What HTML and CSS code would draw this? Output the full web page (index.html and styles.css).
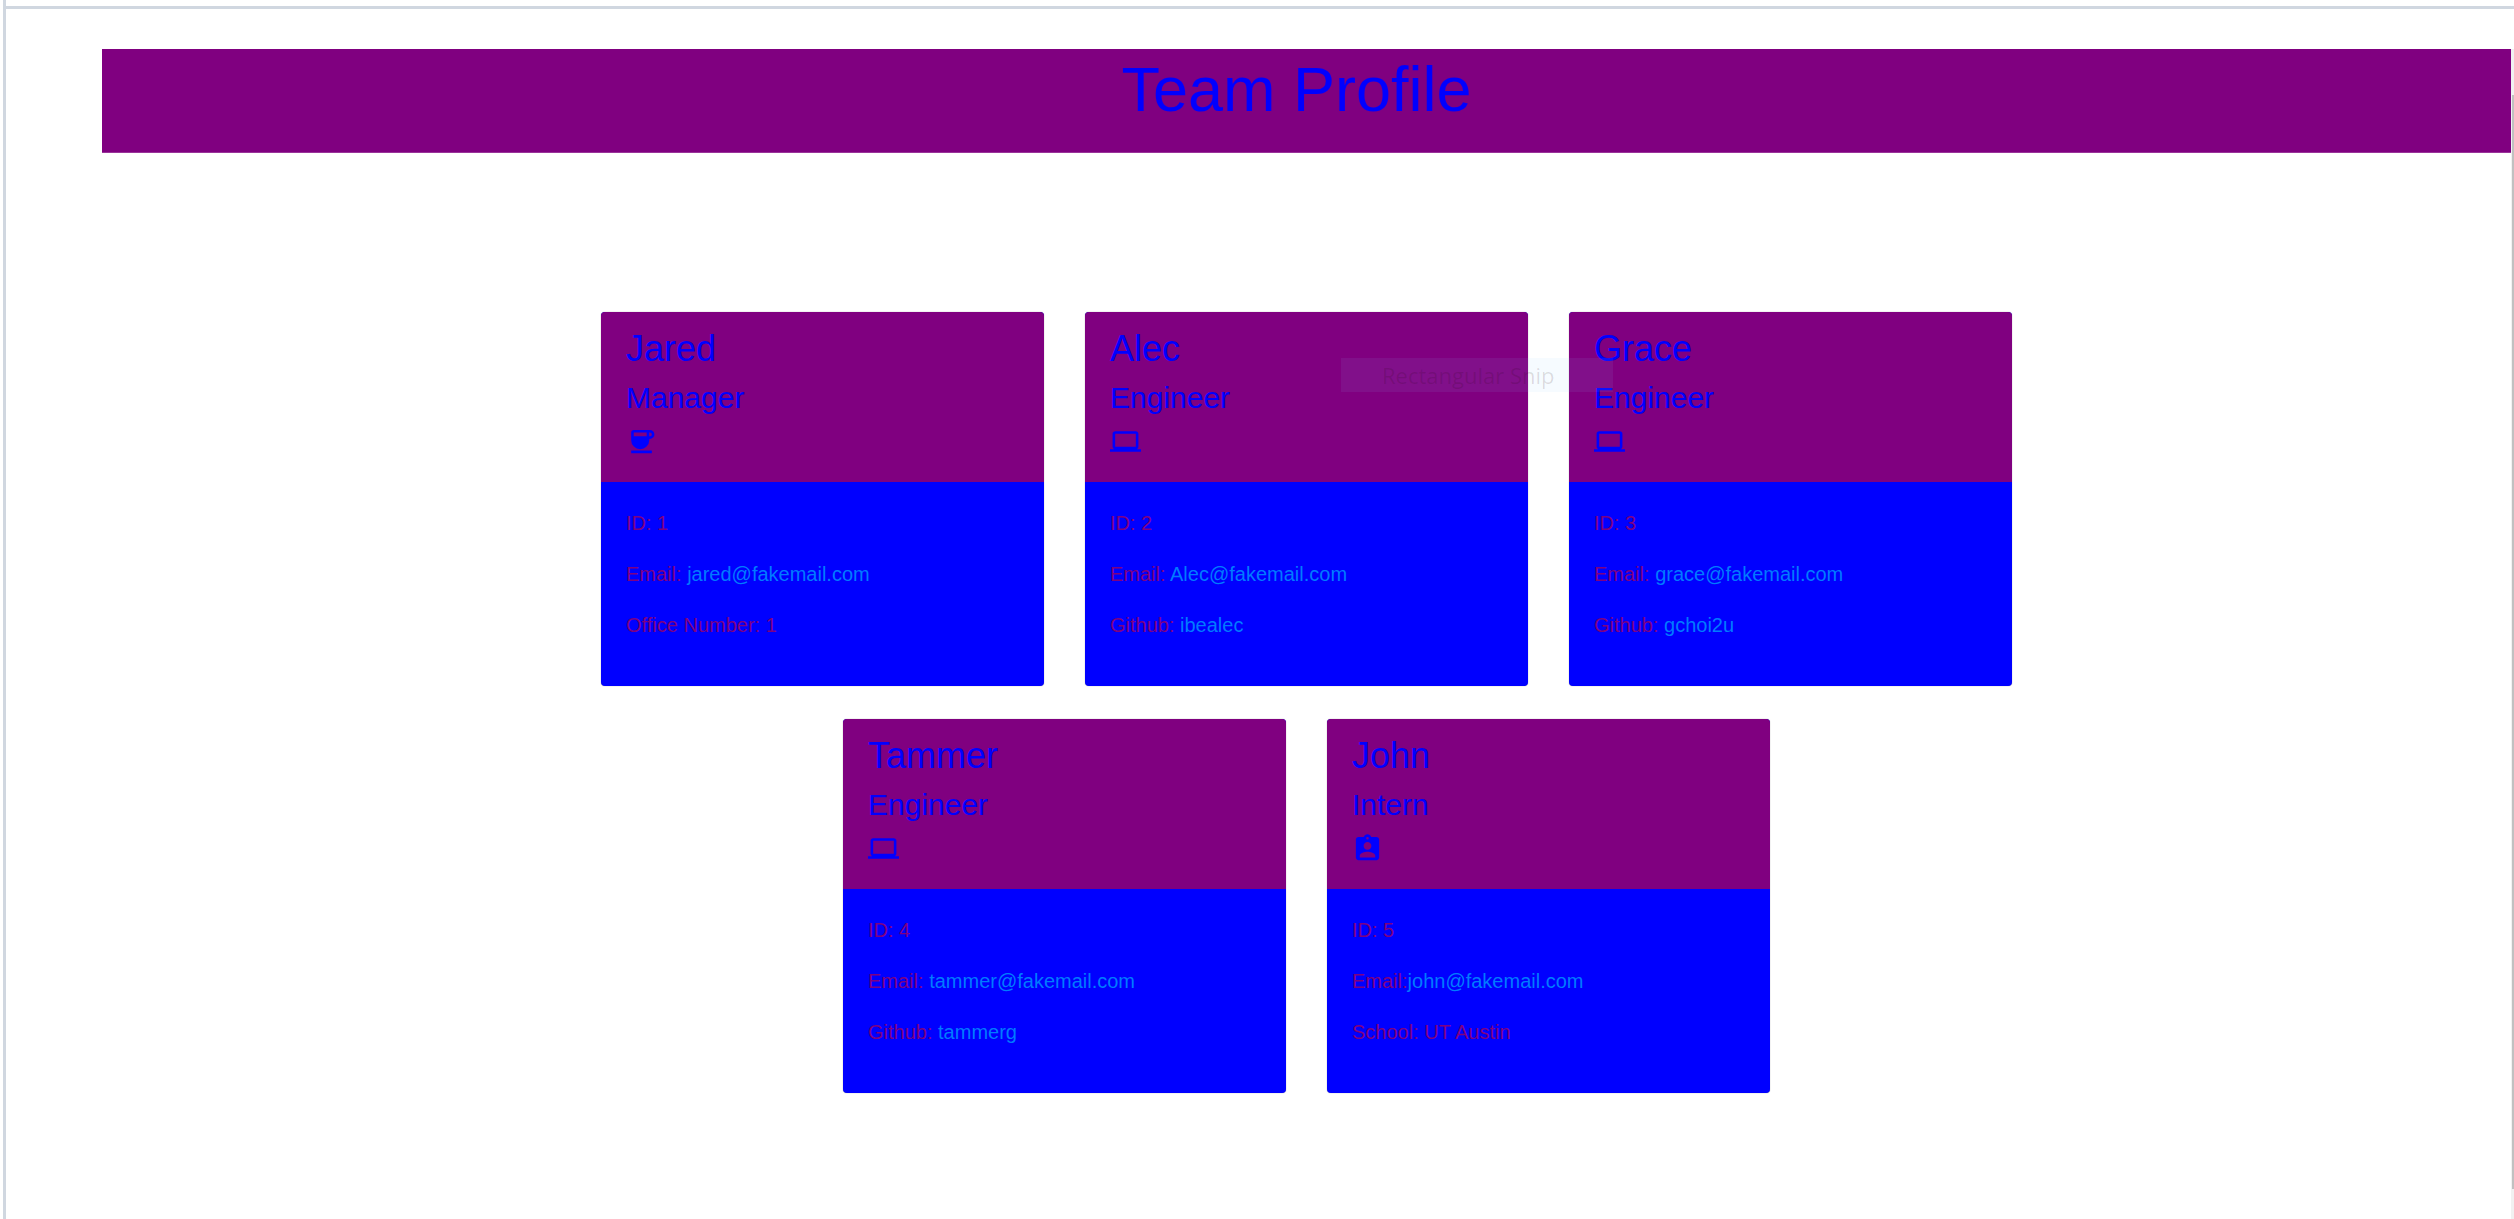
FILE: index.html
```html
<!DOCTYPE html>
<html lang="en">
<head>
<meta charset="utf-8">
<title>Team Profile</title>
<link rel="stylesheet" href="styles.css">
</head>
<body>
<svg class="sprite" aria-hidden="true">
  <symbol id="cup" viewBox="0 0 24 24"><path fill-rule="evenodd" d="M6 3h12.500a3.500 3.500 0 0 1 0 7H18v1a7 7 0 0 1-14 0V5a2 2 0 0 1 2-2zM6 5v3h10V5zM18 5v3h.5a1.500 1.500 0 0 0 0-3zM4 19h16v2H4z"/></symbol>
  <symbol id="laptop" viewBox="0 0 24 24"><path d="M20 18c1.100 0 1.990-.9 1.990-2L22 6c0-1.100-.9-2-2-2H4c-1.100 0-2 .9-2 2v10c0 1.100.9 2 2 2H0v2h24v-2h-4zM4 6h16v10H4V6z"/></symbol>
  <symbol id="badge" viewBox="0 0 24 24"><path d="M19 3h-4.180C14.400 1.840 13.300 1 12 1c-1.300 0-2.400.84-2.820 2H5c-1.100 0-2 .9-2 2v14c0 1.100.9 2 2 2h14c1.100 0 2-.9 2-2V5c0-1.100-.9-2-2-2zm-7 0c.55 0 1 .45 1 1s-.45 1-1 1-1-.45-1-1 .45-1 1-1zm0 4c1.660 0 3 1.340 3 3s-1.340 3-3 3-3-1.340-3-3 1.340-3 3-3zm6 12H6v-1.400c0-2 4-3.100 6-3.100s6 1.100 6 3.100V19z"/></symbol>
</svg>
<div class="frame">
  <div class="viewport">
    <div class="page">
      <header class="banner"><h1 class="title">Team Profile</h1></header>
      <main class="team">
        <article class="card">
          <div class="card-head">
            <h2 class="name">Jared</h2>
            <h3 class="role">Manager</h3>
            <svg class="icon" aria-hidden="true"><use href="#cup"/></svg>
          </div>
          <div class="card-body">
            <p>ID: 1</p>
            <p>Email: <a href="mailto:jared@fakemail.com">jared@fakemail.com</a></p>
            <p>Office Number: 1</p>
          </div>
        </article>
        <article class="card">
          <div class="card-head">
            <h2 class="name">Alec</h2>
            <h3 class="role">Engineer</h3>
            <svg class="icon" aria-hidden="true"><use href="#laptop"/></svg>
          </div>
          <div class="card-body">
            <p>ID: 2</p>
            <p>Email: <a href="mailto:Alec@fakemail.com">Alec@fakemail.com</a></p>
            <p>Github: <a href="https://github.com/ibealec">ibealec</a></p>
          </div>
          <div class="snip">Rectangular Snip</div>
        </article>
        <article class="card">
          <div class="card-head">
            <h2 class="name">Grace</h2>
            <h3 class="role">Engineer</h3>
            <svg class="icon" aria-hidden="true"><use href="#laptop"/></svg>
          </div>
          <div class="card-body">
            <p>ID: 3</p>
            <p>Email: <a href="mailto:grace@fakemail.com">grace@fakemail.com</a></p>
            <p>Github: <a href="https://github.com/gchoi2u">gchoi2u</a></p>
          </div>
        </article>
        <article class="card">
          <div class="card-head">
            <h2 class="name">Tammer</h2>
            <h3 class="role">Engineer</h3>
            <svg class="icon" aria-hidden="true"><use href="#laptop"/></svg>
          </div>
          <div class="card-body">
            <p>ID: 4</p>
            <p>Email: <a href="mailto:tammer@fakemail.com">tammer@fakemail.com</a></p>
            <p>Github: <a href="https://github.com/tammerg">tammerg</a></p>
          </div>
        </article>
        <article class="card">
          <div class="card-head">
            <h2 class="name">John</h2>
            <h3 class="role">Intern</h3>
            <svg class="icon" aria-hidden="true"><use href="#badge"/></svg>
          </div>
          <div class="card-body">
            <p>ID: 5</p>
            <p>Email:<a href="mailto:john@fakemail.com">john@fakemail.com</a></p>
            <p>School: UT Austin</p>
          </div>
        </article>
      </main>
    </div>
    <div class="scrollbar" aria-hidden="true"><div class="thumb"></div></div>
  </div>
</div>
</body>
</html>
```
FILE: styles.css
```css
* { box-sizing: border-box; }

body {
  margin: 0;
  background: #fff;
  color: purple;
  font: 20px/31px "Liberation Sans", Arial, sans-serif;
}

h1, h2, h3, p { margin: 0; font-weight: 400; }
a { color: #007bff; text-decoration: none; }
.sprite { display: none; }

/* Outer frame: a rule down the left side and one across the top */
.frame {
  min-height: 100vh;
  margin-left: 3px;
  padding-top: 6px;
  border-left: 3px solid #d0d7e0;
  display: flex;
}

.viewport {
  flex: 1;
  border-top: 3px solid #d0d7e0;
  padding: 40px 0 0 96px;
  display: flex;
}

.page { flex: 1; min-width: 0; }

.banner {
  background: purple;
  border-bottom: 1px solid #9a339a;
  padding: 2px 20px 24px 0;
  text-align: center;
}

.title { color: blue; font-size: 63px; line-height: 77px; }

.team {
  max-width: 1411px;
  margin: 159px auto 0;
  display: flex;
  flex-wrap: wrap;
  justify-content: center;
  gap: 33px 41px;
}

.card {
  position: relative;
  width: 443px;
  border-radius: 4px;
  background: blue;
  box-shadow: 0 0 1px rgba(0, 0, 0, 0.5);
}

.card-head {
  background: purple;
  color: blue;
  border-radius: 4px 4px 0 0;
  padding: 15px 25px 25px;
}

.name { font-size: 36px; line-height: 43px; margin-bottom: 10px; }
.role { font-size: 30px; line-height: 36px; margin-bottom: 10px; }

.icon { display: block; width: 31px; height: 31px; fill: blue; }

.card-body {
  padding: 26px 25px 45px;
  display: grid;
  gap: 20px;
}

/* Faded menu label that floats over the neighbouring cards */
.snip {
  position: absolute;
  z-index: 1;
  left: 256px;
  top: 46px;
  width: 272px;
  padding-left: 41px;
  background: rgba(135, 207, 255, 0.08);
  color: rgba(30, 0, 0, 0.13);
  font: 22px/34px "Open Sans", "Noto Sans", sans-serif;
  white-space: nowrap;
}

.scrollbar {
  width: 3px;
  padding: 46px 0 30px 1px;
  background: #f1f1f1;
  display: flex;
}

.thumb { flex: 1; background: #c1c1c1; }
```
